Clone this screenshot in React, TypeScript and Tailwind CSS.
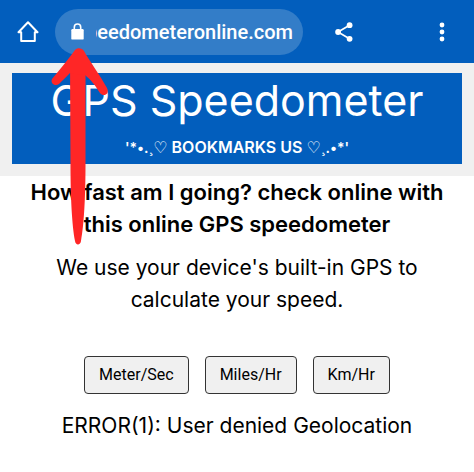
import { useState } from "react";

const units = ["Meter/Sec", "Miles/Hr", "Km/Hr"];

function HomeIcon() {
  return (
    <svg viewBox="0 0 22 22" className="h-[22px] w-[22px]" fill="none" stroke="currentColor" strokeWidth="2" strokeLinejoin="round" strokeLinecap="round">
      <path d="M1.5 11.2 L11 1.2 L20.5 11.2 H17.8 V20 H4.2 V11.2 Z" />
    </svg>
  );
}

function LockIcon() {
  return (
    <svg viewBox="0 0 13 17" className="h-[17px] w-[13px] shrink-0" fill="none">
      <rect x="0.3" y="6" width="12.4" height="10.6" rx="1.2" fill="currentColor" />
      <path d="M3.3 7 V4.2 a3.2 3.2 0 0 1 6.4 0 V7" stroke="currentColor" strokeWidth="1.6" />
    </svg>
  );
}

function ShareIcon() {
  return (
    <svg viewBox="0 0 18 20" className="h-5 w-[18px]" fill="currentColor">
      <path d="M14.5 3.2 L3 10 L14.5 16.8" fill="none" stroke="currentColor" strokeWidth="1.7" />
      <circle cx="14.6" cy="3.2" r="2.9" />
      <circle cx="3.1" cy="10" r="2.9" />
      <circle cx="14.6" cy="16.8" r="2.9" />
    </svg>
  );
}

function MenuIcon() {
  return (
    <svg viewBox="0 0 6 20" className="h-5 w-1.5" fill="currentColor">
      <circle cx="3" cy="3" r="2.4" />
      <circle cx="3" cy="10" r="2.4" />
      <circle cx="3" cy="17" r="2.4" />
    </svg>
  );
}

// red pointer that calls out the lock in the address bar
function PointerArrow() {
  return (
    <svg viewBox="0 0 60 200" className="pointer-events-none absolute top-[47px] left-[50px] h-[200px] w-[60px]" fill="#ff2626">
      <path d="M20 12 H35.5 V118 C35.5 150 34 178 31 194 C30.5 198.5 25.5 198.5 25 194 C22 178 20.5 150 20.5 118 Z" />
      <path d="M25 3 C27 0.5 32 0.5 34 4 C40 15 50 28 57 41 C60 48 53 50 50 46 C45 38 41 33 35 28 L20 26 C17 29 13 33 9 37 C5 40 0 36 2 32 C10 22 18 13 25 3 Z" />
    </svg>
  );
}

export default function App() {
  const [unit, setUnit] = useState("");

  return (
    <div className="relative min-h-screen bg-white font-['Inter','Liberation_Sans',sans-serif] text-black">
      <header className="flex h-[63px] items-center bg-[#025ebd] pr-[29px] pl-[17px] text-white">
        <button aria-label="Home" className="mr-4">
          <HomeIcon />
        </button>
        <div className="flex h-[46px] w-[248px] items-center rounded-full bg-[#337dc8] pr-2.5 pl-4">
          <LockIcon />
          <div className="ml-3 flex min-w-0 flex-1 justify-end overflow-hidden">
            <span className="font-['Roboto',sans-serif] text-xl font-medium">speedometeronline.com</span>
          </div>
        </div>
        <button aria-label="Share" className="ml-8">
          <ShareIcon />
        </button>
        <button aria-label="Menu" className="ml-auto">
          <MenuIcon />
        </button>
      </header>

      <section className="bg-[#f0f0f0] px-3 pt-2.5 pb-3">
        <div className="bg-[#025ebd] pb-1 text-center text-white">
          <h1 className="text-[43px] leading-[54px]">GPS Speedometer</h1>
          <p className="mt-2 text-base leading-6 font-semibold">
            <span className="text-sm">'*•.¸</span>
            <span className="font-['DejaVu_Sans',sans-serif] font-normal">♡</span> BOOKMARKS US{" "}
            <span className="font-['DejaVu_Sans',sans-serif] font-normal">♡</span>
            <span className="text-sm">¸.•*'</span>
          </p>
        </div>
      </section>

      <main className="text-center">
        <h2 className="px-6 text-[22px] leading-8 font-semibold">
          How fast am I going? check online with this online GPS speedometer
        </h2>
        <p className="mt-3 px-10 text-[21px] leading-8">
          We use your device's built-in GPS to calculate your speed.
        </p>
        <div className="mt-10 flex justify-center gap-4 font-['Roboto',sans-serif]">
          {units.map((name) => (
            <button
              key={name}
              onClick={() => setUnit(name)}
              aria-pressed={unit === name}
              className="rounded border border-[#333] bg-[#f0f0f0] px-3.5 py-1.5 text-base"
            >
              {name}
            </button>
          ))}
        </div>
        <p className="mt-4 text-[21px] leading-8">ERROR(1): User denied Geolocation</p>
      </main>

      <PointerArrow />
    </div>
  );
}
